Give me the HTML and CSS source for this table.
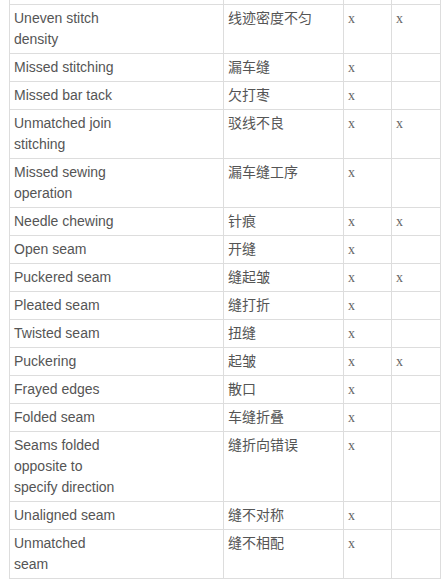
FILE: index.html
```html
<!DOCTYPE html>
<html lang="zh">
<head>
<meta charset="utf-8">
<link rel="stylesheet" href="styles.css">
</head>
<body>
<table class="defects">
<colgroup><col class="c1"><col class="c2"><col class="c3"><col class="c4"></colgroup>
<tr class="stub"><td></td><td></td><td></td><td></td></tr>
<tr><td><div class="en">Uneven stitch density</div></td><td>线迹密度不匀</td><td class="m">x</td><td class="m">x</td></tr>
<tr><td><div class="en">Missed stitching</div></td><td>漏车缝</td><td class="m">x</td><td></td></tr>
<tr><td><div class="en">Missed bar tack</div></td><td>欠打枣</td><td class="m">x</td><td></td></tr>
<tr><td><div class="en">Unmatched join stitching</div></td><td>驳线不良</td><td class="m">x</td><td class="m">x</td></tr>
<tr><td><div class="en">Missed sewing operation</div></td><td>漏车缝工序</td><td class="m">x</td><td></td></tr>
<tr><td><div class="en">Needle chewing</div></td><td>针痕</td><td class="m">x</td><td class="m">x</td></tr>
<tr><td><div class="en">Open seam</div></td><td>开缝</td><td class="m">x</td><td></td></tr>
<tr><td><div class="en">Puckered seam</div></td><td>缝起皱</td><td class="m">x</td><td class="m">x</td></tr>
<tr><td><div class="en">Pleated seam</div></td><td>缝打折</td><td class="m">x</td><td></td></tr>
<tr><td><div class="en">Twisted seam</div></td><td>扭缝</td><td class="m">x</td><td></td></tr>
<tr><td><div class="en">Puckering</div></td><td>起皱</td><td class="m">x</td><td class="m">x</td></tr>
<tr><td><div class="en">Frayed edges</div></td><td>散口</td><td class="m">x</td><td></td></tr>
<tr><td><div class="en">Folded seam</div></td><td>车缝折叠</td><td class="m">x</td><td></td></tr>
<tr><td><div class="en">Seams folded opposite to specify direction</div></td><td>缝折向错误</td><td class="m">x</td><td></td></tr>
<tr><td><div class="en">Unaligned seam</div></td><td>缝不对称</td><td class="m">x</td><td></td></tr>
<tr><td><div class="en">Unmatched seam</div></td><td>缝不相配</td><td class="m">x</td><td></td></tr>
</table>
</body>
</html>
```
FILE: styles.css
```css
html, body {
  margin: 0;
  padding: 0;
  background: #fff;
}
body {
  padding: 0 8px 0 9px;
  font-family: "Liberation Sans", Arial, "Noto Sans CJK SC", sans-serif;
  font-size: 14px;
  color: #555;
}
.defects {
  border-collapse: collapse;
  table-layout: fixed;
  width: 432px;
}
.c1 { width: 214px; }
.c2 { width: 120px; }
.c3 { width: 48px; }
.c4 { width: 49px; }
.defects td {
  border: 1px solid #ddd;
  padding: 3px 4px;
  line-height: 21px;
  vertical-align: top;
  text-align: left;
}
.defects tr.stub td {
  border-top: none;
  padding: 0;
  height: 4px;
  line-height: 4px;
}
.en {
  width: 106px;
}
.defects td.m {
  font-family: "Liberation Serif", "Noto Sans CJK SC", serif;
  color: #666;
}
```
